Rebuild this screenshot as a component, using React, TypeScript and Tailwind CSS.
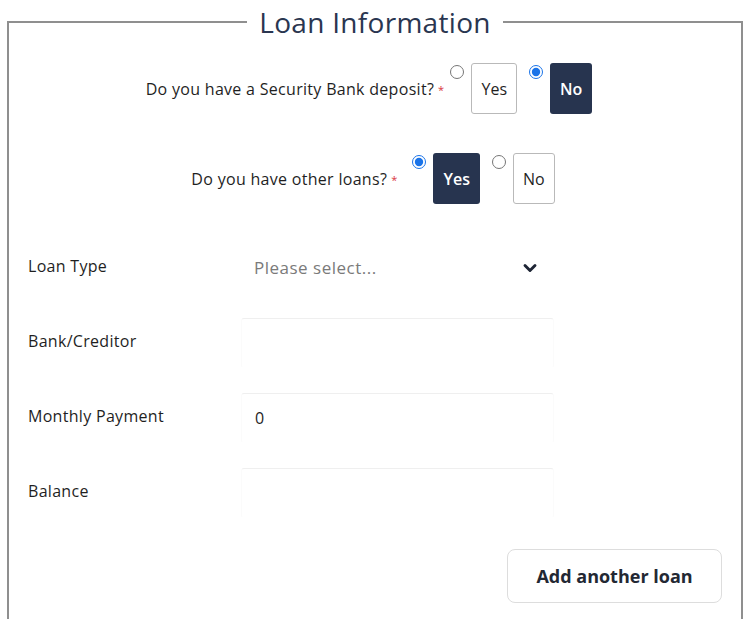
import { useState } from "react";
import { ChevronDown } from "lucide-react";

const font = { fontFamily: '"Open Sans", "Liberation Sans", sans-serif' };

function YesNo({
  question,
  value,
  onChange,
  gap,
  shift,
}: {
  question: string;
  value: "yes" | "no";
  onChange: (v: "yes" | "no") => void;
  gap: string;
  shift: string;
}) {
  const opt = (v: "yes" | "no", text: string) => (
    <label className="flex items-start gap-[7px] cursor-pointer">
      <input
        type="radio"
        checked={value === v}
        onChange={() => onChange(v)}
        className="mt-[2px] h-[14px] w-[14px] accent-[#1a73e8]"
      />
      <span
        className={
          value === v
            ? "flex h-[51px] items-center rounded-[3px] bg-[#27344f] px-[10px] text-[16px] font-semibold text-white"
            : "flex h-[51px] items-center rounded-[3px] border border-[#b9b9b9] bg-white px-[9px] text-[16px] font-medium text-[#1f1f1f]"
        }
      >
        {text}
      </span>
    </label>
  );
  return (
    <div className={`${shift} flex items-start justify-center`}>
      <div className="mt-[14px] flex items-center text-[16px] font-medium tracking-[0.3px] text-[#1f1f1f]">
        {question}
        <span className="ml-[4px] text-[11px] leading-none text-[#d9363e]">*</span>
      </div>
      <div className={`${gap} flex gap-[12px]`}>
        {opt("yes", "Yes")}
        {opt("no", "No")}
      </div>
    </div>
  );
}

function Row({ label, children }: { label: string; children: React.ReactNode }) {
  return (
    <div className="flex items-center">
      <div className="-mt-[5px] w-[213px] text-[16px] font-medium tracking-[0.3px] text-[#1f1f1f]">{label}</div>
      {children}
    </div>
  );
}

function TextInput({ value = "" }: { value?: string }) {
  const [v, setV] = useState(value);
  return (
    <input
      value={v}
      onChange={(e) => setV(e.target.value)}
      className="h-[50px] w-[313px] rounded-[3px] border border-[#fbfbfb] border-t-[#efefef] border-b-white px-[13px] text-[16px] tracking-[0.3px] text-[#1f1f1f] outline-none"
      style={font}
    />
  );
}

export default function App() {
  const [deposit, setDeposit] = useState<"yes" | "no">("no");
  const [otherLoans, setOtherLoans] = useState<"yes" | "no">("yes");

  return (
    <div className="min-h-[619px] bg-white" style={font}>
      <fieldset className="ml-[7px] w-[736px] border-2 border-[#8f8f8f] px-[19px] pb-[20px]">
        <legend className="mx-auto px-[12px] text-[28px] leading-[44px] tracking-[0.3px] text-[#2a3650]">
          Loan Information
        </legend>

        <div className="mt-[19px] flex flex-col gap-[39px]">
          <YesNo
            question="Do you have a Security Bank deposit?"
            value={deposit}
            onChange={setDeposit}
            gap="ml-[6px]"
            shift="pr-[12px]"
          />
          <YesNo
            question="Do you have other loans?"
            value={otherLoans}
            onChange={setOtherLoans}
            gap="ml-[15px]"
            shift="pr-[4px]"
          />
        </div>

        <div className="mt-[39px] flex flex-col gap-[25px]">
          <Row label="Loan Type">
            <div className="flex h-[50px] w-[313px] items-center justify-between pl-[13px] pr-[14px]">
              <span className="text-[17px] tracking-[0.5px] text-[#7a7a7a]">Please select...</span>
              <ChevronDown size={20} strokeWidth={3.5} className="text-[#1e2535]" />
            </div>
          </Row>
          <Row label="Bank/Creditor">
            <TextInput />
          </Row>
          <Row label="Monthly Payment">
            <TextInput value="0" />
          </Row>
          <Row label="Balance">
            <TextInput />
          </Row>
        </div>

        <div className="mt-[31px] flex justify-end">
          <button className="h-[54px] w-[215px] rounded-[8px] border border-[#dddddd] bg-white text-[18px] font-bold text-[#232833]">
            Add another loan
          </button>
        </div>
      </fieldset>
    </div>
  );
}
